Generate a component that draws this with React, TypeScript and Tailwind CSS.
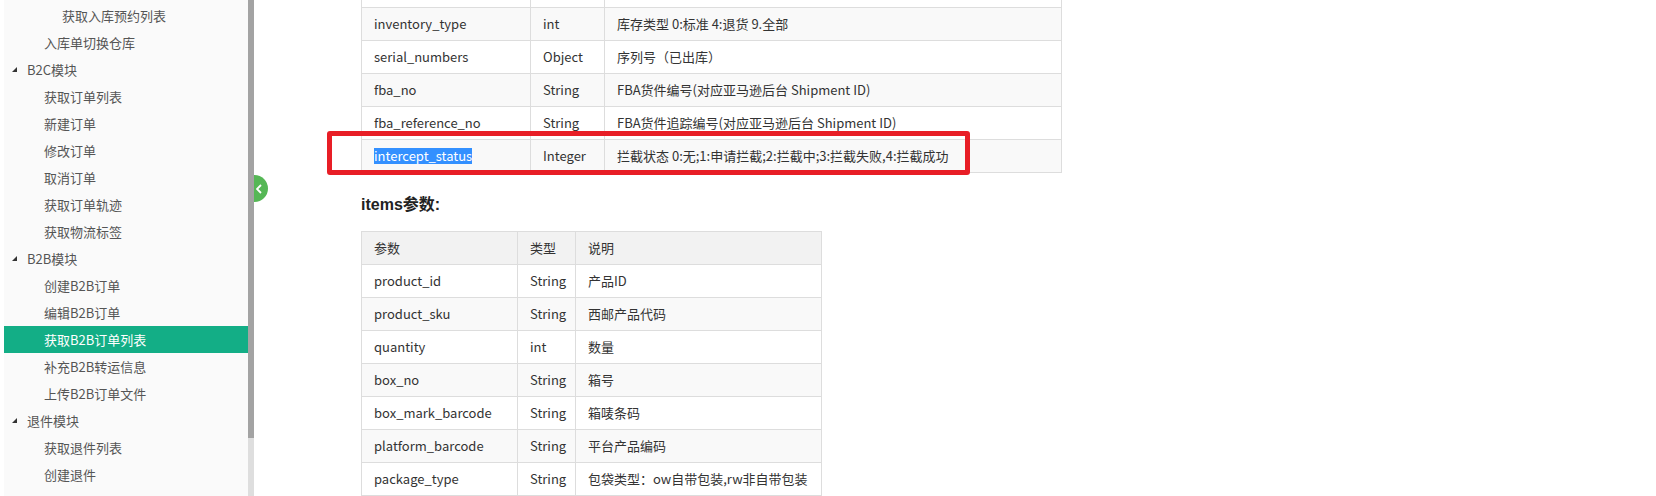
import type { FC } from "react";

type NavItem = { label: string; level: 1 | 2 | 3; active?: boolean };

const navItems: NavItem[] = [
  { label: "获取入库预约列表", level: 3 },
  { label: "入库单切换仓库", level: 2 },
  { label: "B2C模块", level: 1 },
  { label: "获取订单列表", level: 2 },
  { label: "新建订单", level: 2 },
  { label: "修改订单", level: 2 },
  { label: "取消订单", level: 2 },
  { label: "获取订单轨迹", level: 2 },
  { label: "获取物流标签", level: 2 },
  { label: "B2B模块", level: 1 },
  { label: "创建B2B订单", level: 2 },
  { label: "编辑B2B订单", level: 2 },
  { label: "获取B2B订单列表", level: 2, active: true },
  { label: "补充B2B转运信息", level: 2 },
  { label: "上传B2B订单文件", level: 2 },
  { label: "退件模块", level: 1 },
  { label: "获取退件列表", level: 2 },
  { label: "创建退件", level: 2 },
  { label: "修改退件", level: 2 },
];

const orderRows = [
  ["", "", ""],
  ["inventory_type", "int", "库存类型 0:标准 4:退货 9.全部"],
  ["serial_numbers", "Object", "序列号（已出库）"],
  ["fba_no", "String", "FBA货件编号(对应亚马逊后台 Shipment ID)"],
  ["fba_reference_no", "String", "FBA货件追踪编号(对应亚马逊后台 Shipment ID)"],
  ["intercept_status", "Integer", "拦截状态 0:无;1:申请拦截;2:拦截中;3:拦截失败,4:拦截成功"],
];

const itemRows = [
  ["product_id", "String", "产品ID"],
  ["product_sku", "String", "西邮产品代码"],
  ["quantity", "int", "数量"],
  ["box_no", "String", "箱号"],
  ["box_mark_barcode", "String", "箱唛条码"],
  ["platform_barcode", "String", "平台产品编码"],
  ["package_type", "String", "包袋类型：ow自带包装,rw非自带包装"],
];

const Sidebar: FC = () => (
  <div className="relative flex h-full w-[254px] shrink-0">
    <div className="relative z-10 h-full w-[248px] bg-white pl-[4px]">
      <div className="h-full bg-[#fafafa] pt-[2px]">
        {navItems.map((item) => (
          <div
            key={item.label}
            className={
              item.active
                ? "flex h-[27px] items-center bg-[#13ae86] text-white"
                : "flex h-[27px] items-center text-[#555]"
            }
          >
            {item.level === 1 && (
              <>
                <svg width="5" height="5" viewBox="0 0 5 5" className="ml-[8px] mr-[10px]">
                  <polygon points="5,0 5,5 0,5" fill="#333" />
                </svg>
                <span>{item.label}</span>
              </>
            )}
            {item.level === 2 && <span className="pl-[40px]">{item.label}</span>}
            {item.level === 3 && <span className="pl-[58px]">{item.label}</span>}
          </div>
        ))}
      </div>
    </div>
    {/* scrollbar */}
    <div className="relative z-10 flex h-full w-[6px] flex-col">
      <div className="h-[438px] bg-[#a3a3a3]" />
      <div className="flex-1 bg-[#dedede]" />
    </div>
    {/* collapse toggle, half hidden behind the sidebar */}
    <div className="absolute left-[241px] top-[175px] z-0 flex h-[27px] w-[27px] items-center justify-end rounded-full bg-[#55b755] pr-[6px]">
      <svg width="6" height="10" viewBox="0 0 6 10">
        <polyline points="5,1 1,5 5,9" fill="none" stroke="#fff" strokeWidth="1.8" />
      </svg>
    </div>
  </div>
);

const Row: FC<{ cells: string[]; cols: string; bg: string; highlight?: boolean }> = ({
  cells,
  cols,
  bg,
  highlight,
}) => (
  <div className={`grid h-[33px] border-t border-[#ddd] ${cols} ${bg}`}>
    {cells.map((c, i) => (
      <div
        key={i}
        className={
          i === 0
            ? "flex items-center px-3 whitespace-nowrap"
            : "flex items-center border-l border-[#ddd] px-3 whitespace-nowrap"
        }
      >
        {highlight && i === 0 ? (
          <span className="bg-[#3390ff] text-white leading-[16px]">{c}</span>
        ) : (
          c || " "
        )}
      </div>
    ))}
  </div>
);

const App: FC = () => {
  return (
    <div
      className="flex h-[496px] w-[1656px] overflow-hidden bg-white text-[13px]"
      style={{ fontFamily: '"Noto Sans CJK SC", "Noto Sans", sans-serif' }}
    >
      <Sidebar />

      <div className="relative flex-1 pl-[107px] text-[#333]">
        {/* first params table (scrolled) */}
        <div className="-mt-[26px] w-[701px] border-b border-r border-l border-[#ddd]">
          {orderRows.map((r, i) => (
            <Row
              key={i}
              cells={r}
              cols="grid-cols-[168px_74px_1fr]"
              bg={i % 2 === 1 ? "bg-[#f9f9f9]" : "bg-white"}
              highlight={r[0] === "intercept_status"}
            />
          ))}
        </div>

        <h3
          className="mt-[20px] mb-[14px] text-[16px] font-bold leading-[24px] text-[#222]"
          style={{ fontFamily: '"Liberation Sans", "Noto Sans CJK SC", sans-serif' }}
        >
          items参数:
        </h3>

        <div className="w-[461px] border-b border-r border-l border-[#ddd]">
          <Row cells={["参数", "类型", "说明"]} cols="grid-cols-[155px_58px_1fr]" bg="bg-[#f2f2f2]" />
          {itemRows.map((r, i) => (
            <Row
              key={r[0]}
              cells={r}
              cols="grid-cols-[155px_58px_1fr]"
              bg={i % 2 === 1 ? "bg-[#f9f9f9]" : "bg-white"}
            />
          ))}
        </div>

        {/* red annotation box */}
        <div className="absolute left-[73px] top-[131px] h-[44px] w-[643px] rounded-[3px] border-[5px] border-[#e81e26]" />
      </div>
    </div>
  );
};

export default App;
